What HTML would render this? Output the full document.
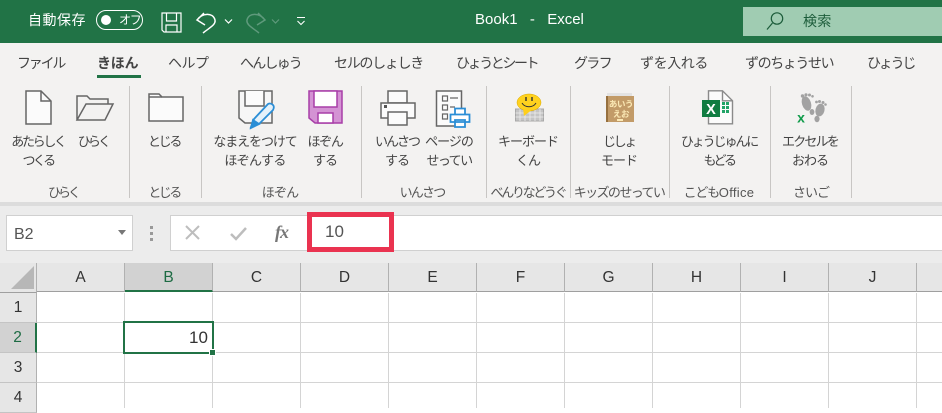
<!DOCTYPE html>
<html lang="ja"><head><meta charset="utf-8"><style>
*{box-sizing:border-box}
html,body{margin:0;padding:0}
body{width:942px;height:408px;overflow:hidden;position:relative;background:#fff;font-family:"Liberation Sans","Noto Sans CJK JP",sans-serif;color:#444}
div,svg{position:absolute}
.t{white-space:nowrap;font-size:14px;line-height:20px;color:#444;top:53px}
.c{transform:translateX(-50%);text-align:center}
.l{font-size:13px;line-height:19px;color:#444;top:132px}
.l span{display:block}
.g{font-size:13px;line-height:18px;color:#555;top:184px}
.sep{width:1px;top:86px;height:112px;background:#c8c6c4}
.col{top:263px;height:29px;font-size:15.500px;line-height:29px;text-align:center;color:#333;background:#e6e6e6;border-right:1px solid #b1b1b1;border-bottom:1px solid #9f9f9f;width:88px;font-family:"Liberation Sans",sans-serif}
.row{left:0;width:37px;height:30px;font-size:15.500px;line-height:30px;text-align:center;color:#333;background:#e6e6e6;border-right:1px solid #b1b1b1;border-bottom:1px solid #c4c4c4}
.h{left:37px;width:905px;height:1px;background:#d4d4d4}
.v{top:293px;width:1px;height:115px;background:#d4d4d4}
</style></head><body>
<div style="left:0;top:0;width:942px;height:43px;background:#217346"></div>
<div class="t" style="left:28px;top:10px;color:#fff;font-size:14px;letter-spacing:.5px">自動保存</div>
<div style="left:96px;top:10px;width:47px;height:20px;border:1px solid #fff;border-radius:10px"></div>
<div style="left:101px;top:15px;width:10px;height:10px;border-radius:50%;background:#fff"></div>
<div class="t" style="left:119px;top:11px;color:#fff;font-size:12px;line-height:18px;letter-spacing:-1.200px">オフ</div>
<svg style="left:161px;top:12px" width="21" height="21" viewBox="0 0 21 21" fill="none" stroke="#fff" stroke-width="1.200"><path d="M1 1h19v19H3l-2-2z"/><path d="M5.500 1v8h10V1M5 20v-7h11v7"/></svg>
<svg style="left:195px;top:11px" width="24" height="24" viewBox="0 0 24 24" fill="none" stroke="#fff" stroke-width="1.500"><path d="M9 2L2 9l8 5M2 9C7 2 18 1 20 9 21 14 14 17 8 22"/></svg>
<svg style="left:224px;top:18px" width="9" height="7" viewBox="0 0 9 7" fill="none" stroke="#fff" stroke-width="1.200"><path d="M1 1.500l3.500 3.500 3.500-3.500"/></svg>
<svg style="left:243px;top:11px" width="24" height="24" viewBox="0 0 24 24" fill="none" stroke="#5f9a7c" stroke-width="1.500"><path d="M15 2l7 7-8 5M22 9C17 2 6 1 4 9 3 14 10 17 16 22"/></svg>
<svg style="left:271px;top:18px" width="9" height="7" viewBox="0 0 9 7" fill="none" stroke="#5f9a7c" stroke-width="1.200"><path d="M1 1.500l3.500 3.500 3.500-3.500"/></svg>
<svg style="left:296px;top:16px" width="10" height="11" viewBox="0 0 10 11" fill="none" stroke="#fff" stroke-width="1.100"><path d="M1 1.500h8M1.500 5L5 8.500 8.500 5"/></svg>
<div class="t" style="left:475px;top:10px;color:#fff;font-size:15px;letter-spacing:0;white-space:pre;word-spacing:2px;font-family:'Liberation Sans',sans-serif">Book1 &nbsp;- &nbsp;Excel</div>
<div style="left:743px;top:7px;width:199px;height:29px;background:#a0ccb2"></div>
<svg style="left:765px;top:11px" width="20" height="20" viewBox="0 0 20 20" fill="none" stroke="#1c5c3a" stroke-width="1.200"><circle cx="12" cy="7.500" r="5.700"/><path d="M7.500 12L2 18.500"/></svg>
<div class="t" style="left:803px;top:11px;color:#1c5c3a;font-size:14px;letter-spacing:.4px">検索</div>

<div style="left:0;top:43px;width:942px;height:159px;background:#f3f2f1"></div>
<div class="t" style="left:17px;letter-spacing:-2.200px">ファイル</div>
<div class="t" style="left:97px;font-weight:700;letter-spacing:-.2px">きほん</div>
<div style="left:97px;top:75px;width:44px;height:3px;background:#217346"></div>
<div class="t" style="left:168px;letter-spacing:-.5px">ヘルプ</div>
<div class="t" style="left:240px;letter-spacing:-1.800px">へんしゅう</div>
<div class="t" style="left:334px;letter-spacing:-1.300px">セルのしょしき</div>
<div class="t" style="left:456px;letter-spacing:-2.400px">ひょうとシート</div>
<div class="t" style="left:574px;letter-spacing:-1.700px">グラフ</div>
<div class="t" style="left:640px;letter-spacing:-.4px">ずを入れる</div>
<div class="t" style="left:745px;letter-spacing:-1.400px">ずのちょうせい</div>
<div class="t" style="left:867px;letter-spacing:-2.200px">ひょうじ</div>

<svg style="left:0;top:85px" width="942" height="50" viewBox="0 0 942 50" fill="#fbfbfb" stroke="#666" stroke-width="1.500">
<path d="M26 6h15l10 10v23H26z"/><path d="M41 6v10h10" fill="none"/>
<path d="M77 35V11h10l3 3h18v5M77 35l9-16h27l-8 16z" fill="none"/>
<path d="M149 25v11h34V12h-21l-3-3h-10z" fill="#fbfbfb"/><path d="M149 12h13" fill="none"/>
<path d="M239 6h33v32h-27l-6-5z" fill="#f6f6f6"/><path d="M245 6v15h19V6" fill="#fbfbfb"/>
<path d="M309 6h33v32h-27l-6-5z" fill="#d493d4" stroke="#a83ea8"/><path d="M314 6h23v16h-23z" fill="#fff" stroke="#a83ea8"/><path d="M318 38V28h15v10z" fill="#fff" stroke="#a83ea8"/>
<path d="M388 18V6h19v12z"/><path d="M381 18h34v15h-34z"/><path d="M388 27h19v13h-19z"/>
<path d="M436.500 6h25v35h-25z" fill="#fbfbfb"/><path d="M442.500 11h5v5h-5zM442.500 20h5v5h-5zM442.500 29h5v5h-5zM450 13h8M450 22h5" fill="none" stroke-width="1.200"/>
</svg>
<div style="left:384px;top:105px;width:3px;height:3px;background:#555"></div>
<svg style="left:248px;top:100px" width="30" height="32" viewBox="0 0 30 32" fill="#e4f1fa" stroke="#2b8ed6" stroke-width="1.800"><path d="M3 27l3-8L20 4c2-1 4 0 5 1s1 3 0 5L11 24z"/><path d="M3 28l2-8 6 4z" fill="#2b8ed6"/></svg>
<svg style="left:449px;top:107px" width="22" height="22" viewBox="0 0 22 22" fill="#fff" stroke="#2b8ed6" stroke-width="1.800"><path d="M6 1.500h10v6H6zM1.500 7.500h19V15h-19zM6 13h10v7H6z"/></svg>

<svg style="left:514px;top:92px" width="32" height="30" viewBox="0 0 32 30"><path d="M1.500 17h28v12h-28z" fill="#c4c4c4" stroke="#a8a8a8"/><path d="M1.500 21h28M1.500 25h28M6 17v12M11 17v12M16 17v12M21 17v12M26 17v12" stroke="#eee" fill="none" stroke-width=".8"/><ellipse cx="15" cy="10.500" rx="12" ry="8.500" fill="#ffd21e" stroke="#d9a800" stroke-width=".5"/><path d="M9 16l1 8 9-7z" fill="#ffcf1a"/><path d="M12 5v4M18 5v4" stroke="#333" stroke-width="1.400"/><path d="M8 11c3 5 11 5 14 0" fill="none" stroke="#333" stroke-width="1"/></svg>

<div style="left:607px;top:93px;width:25px;height:4px;background:#e3e3e3"></div>
<div style="left:606px;top:96px;width:28px;height:26px;background:#c29b68;border-left:2px solid #96703f"></div>
<div style="left:607px;top:99px;width:28px;font-size:8.500px;line-height:10px;color:#fbe9b5;text-align:center;letter-spacing:-.4px;font-weight:700">あいう<br>えお</div>
<div style="left:617px;top:119px;width:6px;height:2px;background:#fbe9b5"></div>

<svg style="left:700px;top:90px" width="36" height="36" viewBox="0 0 36 36"><path d="M8.500.8h14l10 10v23h-24z" fill="#fbfbfb" stroke="#8a8a8a" stroke-width="1.400"/><path d="M22.500.8v10h10" fill="none" stroke="#8a8a8a" stroke-width="1.400"/><rect x="2" y="10" width="18" height="17" fill="#107c41"/><text x="11" y="24" fill="#fff" font-size="14.500" font-weight="700" text-anchor="middle" font-family="Liberation Sans,sans-serif">X</text><path d="M22 12h3v3h-3zM26 12h3v3h-3zM22 16h3v3h-3zM26 16h3v3h-3zM22 20h3v3h-3zM26 20h3v3h-3z" fill="#21a366"/></svg>

<svg style="left:796px;top:92px" width="34" height="34" viewBox="0 0 34 34" fill="#a2a2a2"><ellipse cx="10.500" cy="11.500" rx="4.500" ry="7.500" transform="rotate(-18 10.500 11.500)"/><ellipse cx="16" cy="20" rx="2.400" ry="3"/><circle cx="6.500" cy="4" r="1.700"/><circle cx="10" cy="2.800" r="1.600"/><circle cx="13.500" cy="3" r="1.500"/><circle cx="16.500" cy="4.300" r="1.300"/><ellipse cx="24" cy="18" rx="4.500" ry="6.500" transform="rotate(14 24 18)"/><ellipse cx="21" cy="27" rx="2.600" ry="3.200"/><circle cx="20.500" cy="10" r="1.400"/><circle cx="23.500" cy="9.500" r="1.500"/><circle cx="27" cy="10.500" r="1.500"/><circle cx="29.500" cy="12.500" r="1.300"/><text x="5" y="30.500" fill="#0f9b4a" font-size="14" font-weight="700" font-family="Liberation Sans,sans-serif" text-anchor="middle" stroke="none">x</text></svg>

<div class="t l c" style="left:38px"><span style="letter-spacing:-2.300px">あたらしく</span><span style="letter-spacing:-2.600px">つくる</span></div>
<div class="t l c" style="left:93px"><span style="letter-spacing:-2.800px">ひらく</span></div>
<div class="t l c" style="left:164px"><span style="letter-spacing:-2.300px">とじる</span></div>
<div class="t l c" style="left:255px"><span style="letter-spacing:-1.100px">なまえをつけて</span><span style="letter-spacing:-.7px">ほぞんする</span></div>
<div class="t l c" style="left:325px"><span style="letter-spacing:-1.300px">ほぞん</span><span style="letter-spacing:-1px">する</span></div>
<div class="t l c" style="left:397px"><span style="letter-spacing:-2px">いんさつ</span><span style="letter-spacing:-1px">する</span></div>
<div class="t l c" style="left:449px"><span style="letter-spacing:-1px">ページの</span><span style="letter-spacing:-1.500px">せってい</span></div>
<div class="t l c" style="left:528px"><span style="letter-spacing:-1px">キーボード</span><span style="letter-spacing:-1px">くん</span></div>
<div class="t l c" style="left:619px"><span style="letter-spacing:-2.300px">じしょ</span><span style="letter-spacing:-1px">モード</span></div>
<div class="t l c" style="left:719px"><span style="letter-spacing:-2.100px">ひょうじゅんに</span><span style="letter-spacing:-2.600px">もどる</span></div>
<div class="t l c" style="left:810px"><span style="letter-spacing:-1.800px">エクセルを</span><span style="letter-spacing:-1px">おわる</span></div>

<div class="t g c" style="left:63px;letter-spacing:-3px">ひらく</div>
<div class="t g c" style="left:164px;letter-spacing:-2.600px">とじる</div>
<div class="t g c" style="left:280px;letter-spacing:-.8px">ほぞん</div>
<div class="t g c" style="left:422px;letter-spacing:-1.800px">いんさつ</div>
<div class="t g c" style="left:528px;letter-spacing:-2.300px">べんりなどうぐ</div>
<div class="t g c" style="left:619px;letter-spacing:-1.600px">キッズのせってい</div>
<div class="t g c" style="left:719px;letter-spacing:-1.300px">こども<span style="letter-spacing:.3px">Office</span></div>
<div class="t g c" style="left:811px;letter-spacing:-1px">さいご</div>

<div class="sep" style="left:129px"></div>
<div class="sep" style="left:201px"></div>
<div class="sep" style="left:361px"></div>
<div class="sep" style="left:486px"></div>
<div class="sep" style="left:570px"></div>
<div class="sep" style="left:669px"></div>
<div class="sep" style="left:770px"></div>
<div class="sep" style="left:851px"></div>

<div style="left:0;top:202px;width:942px;height:4px;background:#dcdcdc"></div>
<div style="left:0;top:206px;width:942px;height:57px;background:#ececec"></div>
<div style="left:6px;top:215px;width:127px;height:36px;background:#fff;border:1px solid #d0d0d0"></div>
<div style="left:14px;top:224px;font-size:16px;line-height:22px;color:#555">B2</div>
<svg style="left:117px;top:230px" width="10" height="6"><path d="M1 0h8L5 5z" fill="#777"/></svg>
<div style="left:150px;top:226px;width:3px;height:3px;background:#999"></div>
<div style="left:150px;top:232px;width:3px;height:3px;background:#999"></div>
<div style="left:150px;top:238px;width:3px;height:3px;background:#999"></div>
<div style="left:170px;top:215px;width:772px;height:36px;background:#fff;border:1px solid #d0d0d0;border-right:0"></div>
<svg style="left:184px;top:225px" width="18" height="16" fill="none" stroke="#bdbdbd" stroke-width="2"><path d="M2 1l13 13M15 1L2 14"/></svg>
<svg style="left:229px;top:226px" width="20" height="16" fill="none" stroke="#bdbdbd" stroke-width="2.500"><path d="M2 8l5 5L17 2"/></svg>
<div style="left:275px;top:222px;font:italic 700 18px/20px 'Liberation Serif',serif;color:#777;letter-spacing:-1px">fx</div>
<div style="left:307px;top:212px;width:87px;height:40px;border:5px solid #ea3350;background:#fff"></div>
<div style="left:325px;top:222px;font-size:17px;line-height:20px;color:#555">10</div>

<div style="left:0;top:263px;width:37px;height:30px;background:#e6e6e6;border-right:1px solid #b1b1b1;border-bottom:1px solid #9f9f9f"></div>
<svg style="left:11px;top:266px" width="23" height="23"><path d="M23 0v23H0z" fill="#b7b7b7"/></svg>
<div class="col" style="left:37px">A</div>
<div class="col" style="left:125px;background:#d2d2d2;color:#1d6b43;border-bottom:2px solid #217346">B</div>
<div class="col" style="left:213px">C</div>
<div class="col" style="left:301px">D</div>
<div class="col" style="left:389px">E</div>
<div class="col" style="left:477px">F</div>
<div class="col" style="left:565px">G</div>
<div class="col" style="left:653px">H</div>
<div class="col" style="left:741px">I</div>
<div class="col" style="left:829px">J</div>
<div class="col" style="left:917px;width:30px"></div>

<div class="row" style="top:293px">1</div>
<div class="row" style="top:323px;background:#d2d2d2;color:#1d6b43;border-right:2px solid #217346">2</div>
<div class="row" style="top:353px">3</div>
<div class="row" style="top:383px">4</div>

<div class="h" style="top:322px"></div>
<div class="h" style="top:352px"></div>
<div class="h" style="top:382px"></div>
<div class="v" style="left:124px"></div>
<div class="v" style="left:212px"></div>
<div class="v" style="left:300px"></div>
<div class="v" style="left:388px"></div>
<div class="v" style="left:476px"></div>
<div class="v" style="left:564px"></div>
<div class="v" style="left:652px"></div>
<div class="v" style="left:740px"></div>
<div class="v" style="left:828px"></div>
<div class="v" style="left:916px"></div>

<div style="left:123px;top:321px;width:91px;height:33px;border:2px solid #217346"></div>
<div style="left:210px;top:350px;width:5px;height:5px;background:#217346;outline:1px solid #fff"></div>
<div style="left:189px;top:327px;font-size:17px;line-height:22px;color:#333">10</div>
</body></html>
